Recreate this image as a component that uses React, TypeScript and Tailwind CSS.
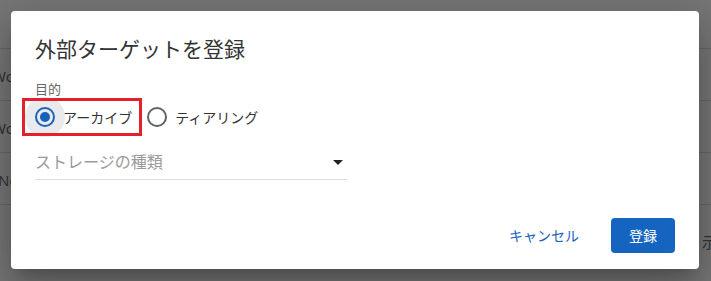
import React from "react";

const FONT = { fontFamily: '"Noto Sans", "Noto Sans CJK JP", sans-serif' };

function BackgroundTable() {
  return (
    <div className="h-[281px] w-[711px] overflow-hidden bg-[#767676] text-[#333]">
      <div className="h-[49px] border-b border-[#666]" />
      <div className="flex h-[52px] items-center border-b border-[#666] text-[15px]">
        <span className="-ml-[8px] pt-[3px]">Wo</span>
      </div>
      <div className="flex h-[52px] items-center border-b border-[#666] text-[15px]">
        <span className="-ml-[8px] pt-[3px]">Wo</span>
      </div>
      <div className="flex h-[52px] items-center border-b border-[#666] text-[15px]">
        <span className="-ml-[2px] pt-[3px]">No</span>
      </div>
      <div className="flex h-[70px] items-start justify-end pt-[26px] text-[15px]">
        <span className="-mr-[6px]">示</span>
      </div>
    </div>
  );
}

function Radio({ checked, label }: { checked: boolean; label: string }) {
  return (
    <label className="flex items-center">
      <span
        className={`flex h-[40px] w-[40px] items-center justify-center rounded-full ${
          checked ? "bg-[#e8eaed]" : ""
        }`}
      >
        <span
          className={`flex h-[20px] w-[20px] items-center justify-center rounded-full border-2 ${
            checked ? "border-[#1a62b8]" : "border-[#5f6368]"
          }`}
        >
          {checked && <span className="h-[10px] w-[10px] rounded-full bg-[#1a62b8]" />}
        </span>
      </span>
      <span className="-ml-[2px] text-[14px] text-[#333]">{label}</span>
    </label>
  );
}

export default function App() {
  return (
    <div className="relative h-[281px] w-[711px] overflow-hidden" style={FONT}>
      <BackgroundTable />

      {/* Dialog */}
      <div className="absolute left-[11px] top-[11px] flex h-[258px] w-[688px] flex-col rounded-[4px] bg-white pl-[24px] pr-[24px] pt-[24px] shadow-[0_11px_15px_-7px_rgba(0,0,0,0.2),0_24px_38px_3px_rgba(0,0,0,0.14),0_9px_46px_8px_rgba(0,0,0,0.12)]">
        <h2 className="text-[21px] leading-[29px] text-[#333]">外部ターゲットを登録</h2>

        <div className="mt-[18px] text-[13px] leading-[15px] text-[#666]">目的</div>

        <div className="relative -ml-[10px] flex h-[40px] items-center gap-[5px]">
          <Radio checked label="アーカイブ" />
          <Radio checked={false} label="ティアリング" />
          {/* highlight box */}
          <div className="pointer-events-none absolute left-[-3px] top-[1px] h-[38px] w-[120px] border-[3px] border-[#e3212b]" />
        </div>

        <div className="mt-[8px] flex h-[35px] w-[312px] items-center justify-between border-b border-[#ddd]">
          <span className="text-[16px] text-[#9a9a9a]">ストレージの種類</span>
          <svg width="10" height="5" viewBox="0 0 10 5" className="mr-[4px]">
            <path d="M0 0h10L5 5z" fill="#222" />
          </svg>
        </div>

        <div className="mt-auto mb-[16px] flex items-center justify-end gap-[24px]">
          <button className="px-[8px] text-[14px] text-[#1a62b8]">キャンセル</button>
          <button className="h-[35px] w-[64px] rounded-[4px] bg-[#1565c0] text-[14px] text-white">登録</button>
        </div>
      </div>
    </div>
  );
}
